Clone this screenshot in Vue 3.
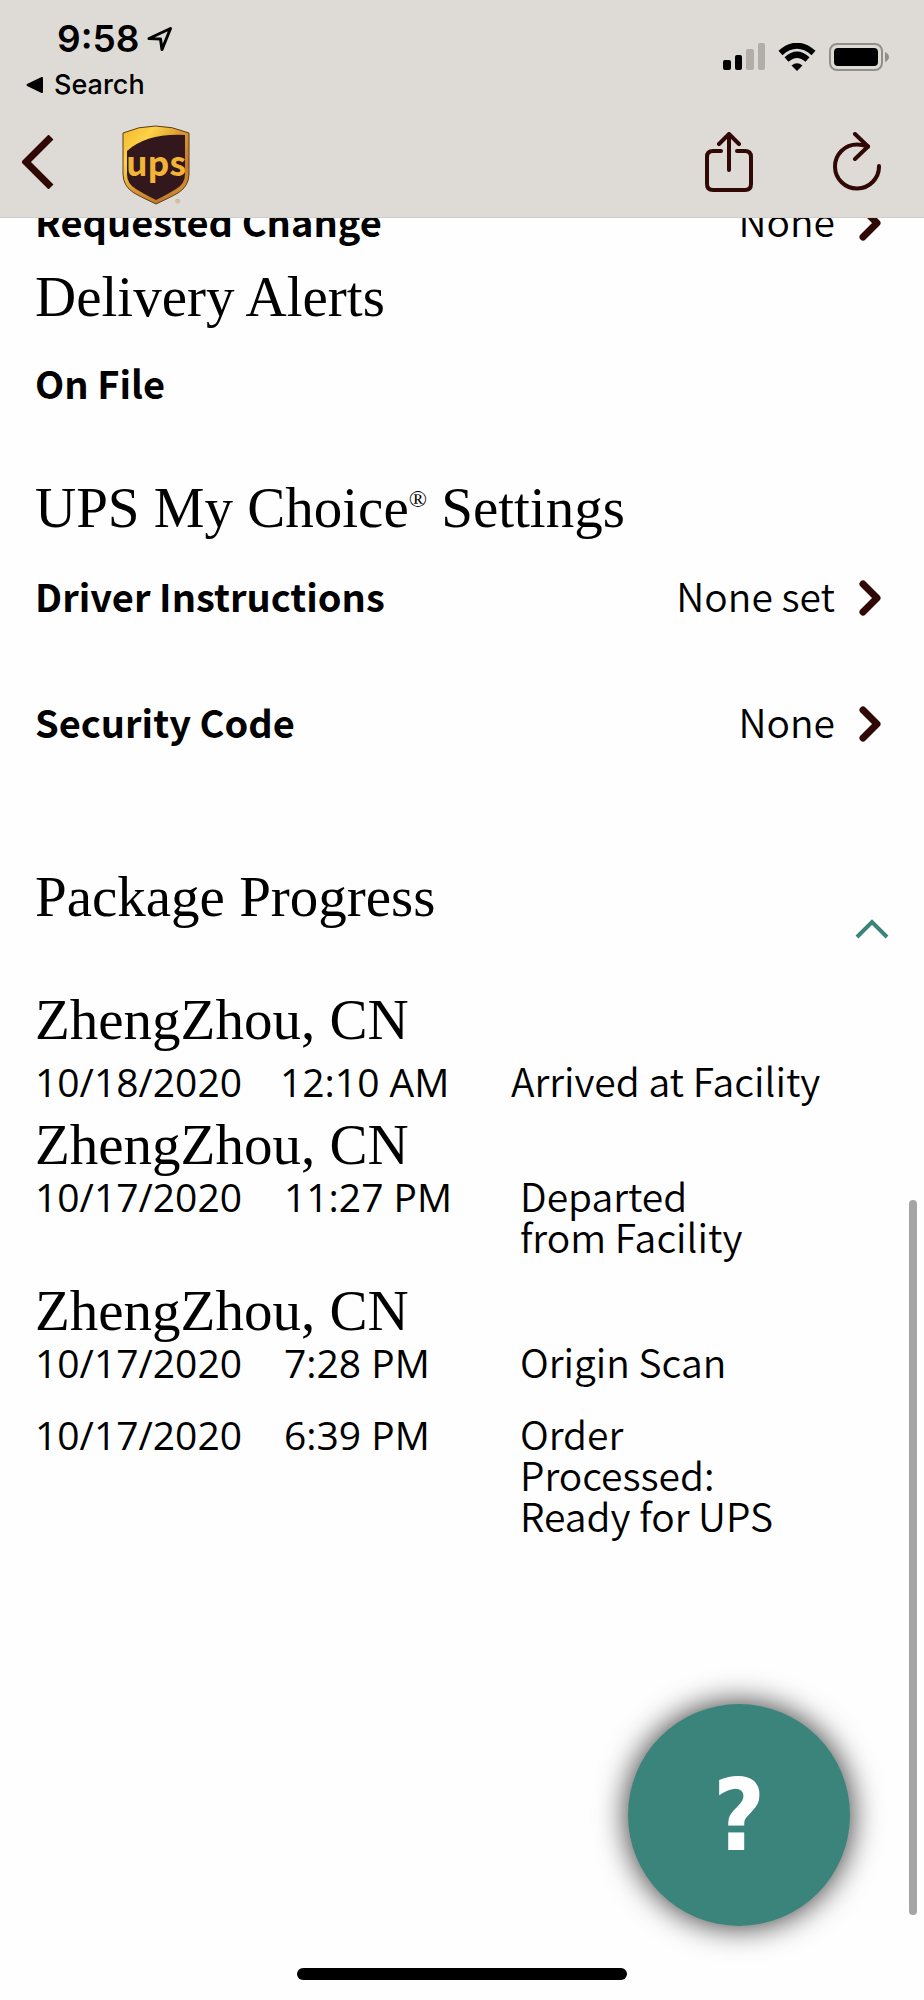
<template>
  <div class="screen">
    <header class="top-bar">
      <div class="status-bar">
        <div class="status-left">
          <div class="clock">
            <span>9:58</span>
            <svg class="location" viewBox="0 0 26 26" aria-hidden="true">
              <path d="M2 12.500 L23.500 2.500 L15 23.500 L13.500 13 Z" />
            </svg>
          </div>
          <a class="back-app" href="#">
            <svg viewBox="0 0 18 18" aria-hidden="true">
              <path d="M1.500 9 L16 2 V16 Z" />
            </svg>
            <span>Search</span>
          </a>
        </div>
        <div class="status-right">
          <svg class="signal" viewBox="0 0 42 27" aria-hidden="true">
            <rect x="0" y="17" width="8" height="10" rx="2" />
            <rect x="12" y="12" width="7" height="15" rx="2" />
            <rect class="dim" x="23" y="6" width="8" height="21" rx="2" />
            <rect class="dim" x="35" y="0" width="7" height="27" rx="2" />
          </svg>
          <svg class="wifi" viewBox="0 0 38 28" aria-hidden="true">
            <path class="arc" d="M2.500 10 Q19 -4.500 35.500 10" />
            <path class="arc" d="M8.500 16.500 Q19 7 29.500 16.500" />
            <path d="M19 28 L13.500 22.500 Q19 18 24.500 22.500 Z" />
          </svg>
          <svg class="battery" viewBox="0 0 60 28" aria-hidden="true">
            <rect class="shell" x="1" y="1" width="52" height="26" rx="7" />
            <rect x="5" y="5" width="44" height="18" rx="4" />
            <path class="cap" d="M56 9 Q60 11 60 14 Q60 17 56 19 Z" />
          </svg>
        </div>
      </div>

      <nav class="nav-bar">
        <button class="icon-button" type="button" aria-label="Back">
          <svg class="back" viewBox="0 0 32 54" aria-hidden="true">
            <path d="M29 2 L4 27 L29 52" />
          </svg>
        </button>
        <svg class="logo" viewBox="0 0 70 82" role="img" aria-label="UPS">
          <defs>
            <linearGradient id="gold" x1="0" y1="0" x2="1" y2="1">
              <stop offset="0" stop-color="#f3b62b" />
              <stop offset="0.25" stop-color="#fdd247" />
              <stop offset="0.5" stop-color="#d9962f" />
              <stop offset="0.75" stop-color="#c07a2c" />
              <stop offset="1" stop-color="#eba931" />
            </linearGradient>
          </defs>
          <path
            class="shield"
            d="M1 8 Q33 -6 67 8 V49 Q67 61 56 68 Q47 73 34 79 Q21 73 12 68 Q1 61 1 49 Z"
          />
          <path
            class="shield-inner"
            d="M5 26 Q25 8 63 10 V49 Q63 59 54 64 Q46 69 34 75 Q22 69 14 64 Q5 59 5 49 Z"
          />
          <text class="logo-text" x="34" y="51" text-anchor="middle">ups</text>
          <text class="logo-mark" x="53" y="80">®</text>
        </svg>
        <div class="nav-actions">
          <button class="icon-button" type="button" aria-label="Share">
            <svg class="share" viewBox="0 0 48 60" aria-hidden="true">
              <path d="M16 19 H8 Q2 19 2 25 V52 Q2 58 8 58 H40 Q46 58 46 52 V25 Q46 19 40 19 H32" />
              <path d="M24 38 V2 M14 12 L24 2 L34 12" />
            </svg>
          </button>
          <button class="icon-button" type="button" aria-label="Refresh">
            <svg class="refresh" viewBox="0 0 48 60" aria-hidden="true">
              <path d="M46 34 A22 22 0 1 1 24 12.500 Q29 12.500 35 14.500" />
              <path d="M22 2 L35 14.500 L22 27" />
            </svg>
          </button>
        </div>
      </nav>
    </header>

    <main class="content">
      <section class="scrolled">
        <a class="row" href="#">
          <span class="label">Requested Change</span>
          <span class="value">None</span>
          <svg class="chevron" viewBox="0 0 22 36" aria-hidden="true"><path d="M4 4 L18 18 L4 32" /></svg>
        </a>
      </section>

      <section class="alerts">
        <h2>Delivery Alerts</h2>
        <p class="label">On File</p>
      </section>

      <section class="settings">
        <h2>UPS My Choice<sup>®</sup> Settings</h2>
        <a v-for="setting in settings" :key="setting.label" class="row" href="#">
          <span class="label">{{ setting.label }}</span>
          <span class="value">{{ setting.value }}</span>
          <svg class="chevron" viewBox="0 0 22 36" aria-hidden="true"><path d="M4 4 L18 18 L4 32" /></svg>
        </a>
      </section>

      <section class="progress">
        <div class="progress-header">
          <h2>Package Progress</h2>
          <button
            class="icon-button toggle"
            type="button"
            aria-label="Toggle package progress"
            :aria-expanded="isOpen"
            @click="isOpen = !isOpen"
          >
            <svg :class="{ closed: !isOpen }" viewBox="0 0 34 20" aria-hidden="true">
              <path d="M2 18 L17 3 L32 18" />
            </svg>
          </button>
        </div>
        <div v-if="isOpen" class="stops">
          <div v-for="(stop, index) in stops" :key="index" class="stop" :class="{ latest: index === 0 }">
            <h3>{{ stop.place }}</h3>
            <div v-for="event in stop.events" :key="event.time" class="event">
              <span class="date">{{ event.date }}</span>
              <span class="date">{{ event.time }}</span>
              <span class="activity">{{ event.activity }}</span>
            </div>
          </div>
        </div>
      </section>
    </main>

    <div class="scrollbar"></div>
    <button class="help" type="button" aria-label="Help">?</button>
    <div class="home-indicator"></div>
  </div>
</template>

<script setup>
import { ref } from 'vue'

const isOpen = ref(true)

const settings = [
  { label: 'Driver Instructions', value: 'None set' },
  { label: 'Security Code', value: 'None' }
]

const stops = [
  {
    place: 'ZhengZhou, CN',
    events: [{ date: '10/18/2020', time: '12:10 AM', activity: 'Arrived at Facility' }]
  },
  {
    place: 'ZhengZhou, CN',
    events: [{ date: '10/17/2020', time: '11:27 PM', activity: 'Departed from\u00a0Facility' }]
  },
  {
    place: 'ZhengZhou, CN',
    events: [
      { date: '10/17/2020', time: '7:28 PM', activity: 'Origin Scan' },
      { date: '10/17/2020', time: '6:39 PM', activity: 'Order Processed: Ready for UPS' }
    ]
  }
]
</script>

<style>
body {
  background: #fefefe;
}
</style>

<style scoped>
.screen {
  min-height: 100vh;
  font-family: "Noto Sans CJK JP", "Noto Sans", sans-serif;
  font-size: 39px;
  font-weight: 350;
  line-height: 41px;
  color: #000;
}

h2,
h3,
p {
  margin: 0;
}

h2,
h3 {
  font-family: "Liberation Serif", serif;
  font-size: 57px;
  font-weight: 400;
  line-height: 60px;
}

a {
  color: inherit;
  text-decoration: none;
}

svg {
  display: block;
  flex-shrink: 0;
}

.icon-button {
  padding: 0;
  border: 0;
  background: none;
  cursor: pointer;
}

.icon-button svg {
  fill: none;
  stroke: #300806;
  stroke-width: 4;
  stroke-linecap: round;
  stroke-linejoin: round;
}

/* Top bar */
.top-bar {
  position: relative;
  z-index: 1;
  box-sizing: border-box;
  height: 218px;
  padding: 18px 35px 0 22px;
  border-bottom: 1px solid #cfcdc8;
  background: #dedbd6;
  font-family: Inter, sans-serif;
}

.status-bar {
  display: flex;
  justify-content: space-between;
}

.clock {
  display: flex;
  align-items: center;
  gap: 8px;
  padding-left: 35px;
  font-size: 37px;
  font-weight: 600;
}

.location {
  width: 26px;
  height: 26px;
  fill: none;
  stroke: #000;
  stroke-width: 3;
  stroke-linejoin: round;
}

.back-app {
  display: flex;
  align-items: center;
  gap: 10px;
  padding-left: 4px;
  font-size: 27px;
  font-weight: 500;
  line-height: 52px;
}

.back-app svg {
  width: 18px;
  height: 18px;
  stroke: #000;
  stroke-width: 2;
  stroke-linejoin: round;
}

.status-right {
  display: flex;
  align-items: flex-start;
  gap: 13px;
  padding-top: 25px;
}

.signal {
  width: 42px;
  height: 27px;
}

.dim {
  fill: #b1aeaa;
}

.wifi {
  width: 38px;
  height: 28px;
}

.wifi .arc {
  fill: none;
  stroke: #000;
  stroke-width: 6;
}

.battery {
  width: 60px;
  height: 28px;
}

.shell {
  fill: none;
  stroke: #918f8c;
  stroke-width: 2;
}

.cap {
  fill: #918f8c;
}

.nav-bar {
  display: flex;
  align-items: center;
  height: 82px;
  margin-top: 14px;
}

.nav-bar .icon-button {
  margin-bottom: 8px;
}

.icon-button .back {
  width: 32px;
  height: 54px;
  stroke-width: 7;
  stroke-linecap: butt;
  stroke-linejoin: miter;
}

.logo {
  width: 70px;
  height: 82px;
  margin-left: 68px;
}

.shield {
  fill: url(#gold);
  stroke: #5c3a1c;
  stroke-width: 1;
}

.shield-inner {
  fill: #32171c;
}

.logo-text {
  fill: #f3b336;
  font-family: "Noto Sans CJK JP", sans-serif;
  font-size: 34px;
  font-weight: 700;
}

.logo-mark {
  fill: #c98d5a;
  font-size: 8px;
}

.nav-actions {
  display: flex;
  gap: 80px;
  margin-left: auto;
  padding-right: 8px;
}

.share,
.refresh {
  width: 48px;
  height: 60px;
}

/* Content */
.content {
  padding: 0 43px 0 35px;
}

.label {
  font-size: 38px;
  font-weight: 700;
}

.row {
  display: flex;
  align-items: center;
}

.value {
  margin-left: auto;
}

.chevron {
  width: 22px;
  height: 36px;
  margin-top: 5px;
  margin-left: 24px;
  fill: none;
  stroke: #300806;
  stroke-width: 7;
  stroke-linecap: round;
  stroke-linejoin: round;
}

/* First row is scrolled partly under the top bar */
.scrolled {
  margin-top: -18px;
}

.alerts {
  margin-top: 26px;
}

.alerts .label {
  margin-top: 35px;
}

.settings {
  margin-top: 75px;
}

sup {
  font-size: 24px;
  line-height: 0;
}

.settings .row {
  margin-top: 37px;
}

.settings .row + .row {
  margin-top: 85px;
}

.progress {
  margin-top: 125px;
}

.progress-header {
  display: flex;
  align-items: flex-end;
  justify-content: space-between;
  height: 72px;
}

.progress-header h2 {
  align-self: flex-start;
}

.icon-button.toggle {
  margin-right: -8px;
}

.toggle svg {
  width: 34px;
  height: 20px;
  stroke: #3b847c;
  stroke-linecap: butt;
  stroke-linejoin: miter;
}

.closed {
  transform: rotate(180deg);
}

.stops {
  display: flex;
  flex-direction: column;
  gap: 24px;
  padding: 51px 0 240px;
}

.event {
  display: grid;
  grid-template-columns: 249px 236px 1fr;
  align-items: baseline;
}

.event + .event {
  margin-top: 30px;
}

.date {
  font-family: "Open Sans", sans-serif;
  font-weight: 400;
}

.activity {
  max-width: 270px;
}

.latest {
  margin-bottom: -11px;
}

.latest .event {
  grid-template-columns: 245px 231px 1fr;
  margin-top: 10px;
}

.latest .activity {
  max-width: none;
}

/* Overlays */
.scrollbar {
  position: fixed;
  top: 60%;
  right: 7px;
  bottom: 85px;
  width: 8px;
  border-radius: 4px;
  background: #a5a5a5;
}

.help {
  position: fixed;
  right: 74px;
  bottom: 74px;
  width: 222px;
  height: 222px;
  padding: 0;
  border: 0;
  border-radius: 50%;
  background: #3b847c;
  box-shadow: 0 0 30px 2px rgba(0, 0, 0, 0.75);
  color: #fff;
  font-family: "DejaVu Sans Condensed", "DejaVu Sans", sans-serif;
  font-size: 100px;
  font-weight: 700;
  cursor: pointer;
}

.home-indicator {
  position: fixed;
  right: 0;
  bottom: 20px;
  left: 0;
  width: 330px;
  height: 12px;
  margin: 0 auto;
  border-radius: 6px;
  background: #000;
}
</style>
